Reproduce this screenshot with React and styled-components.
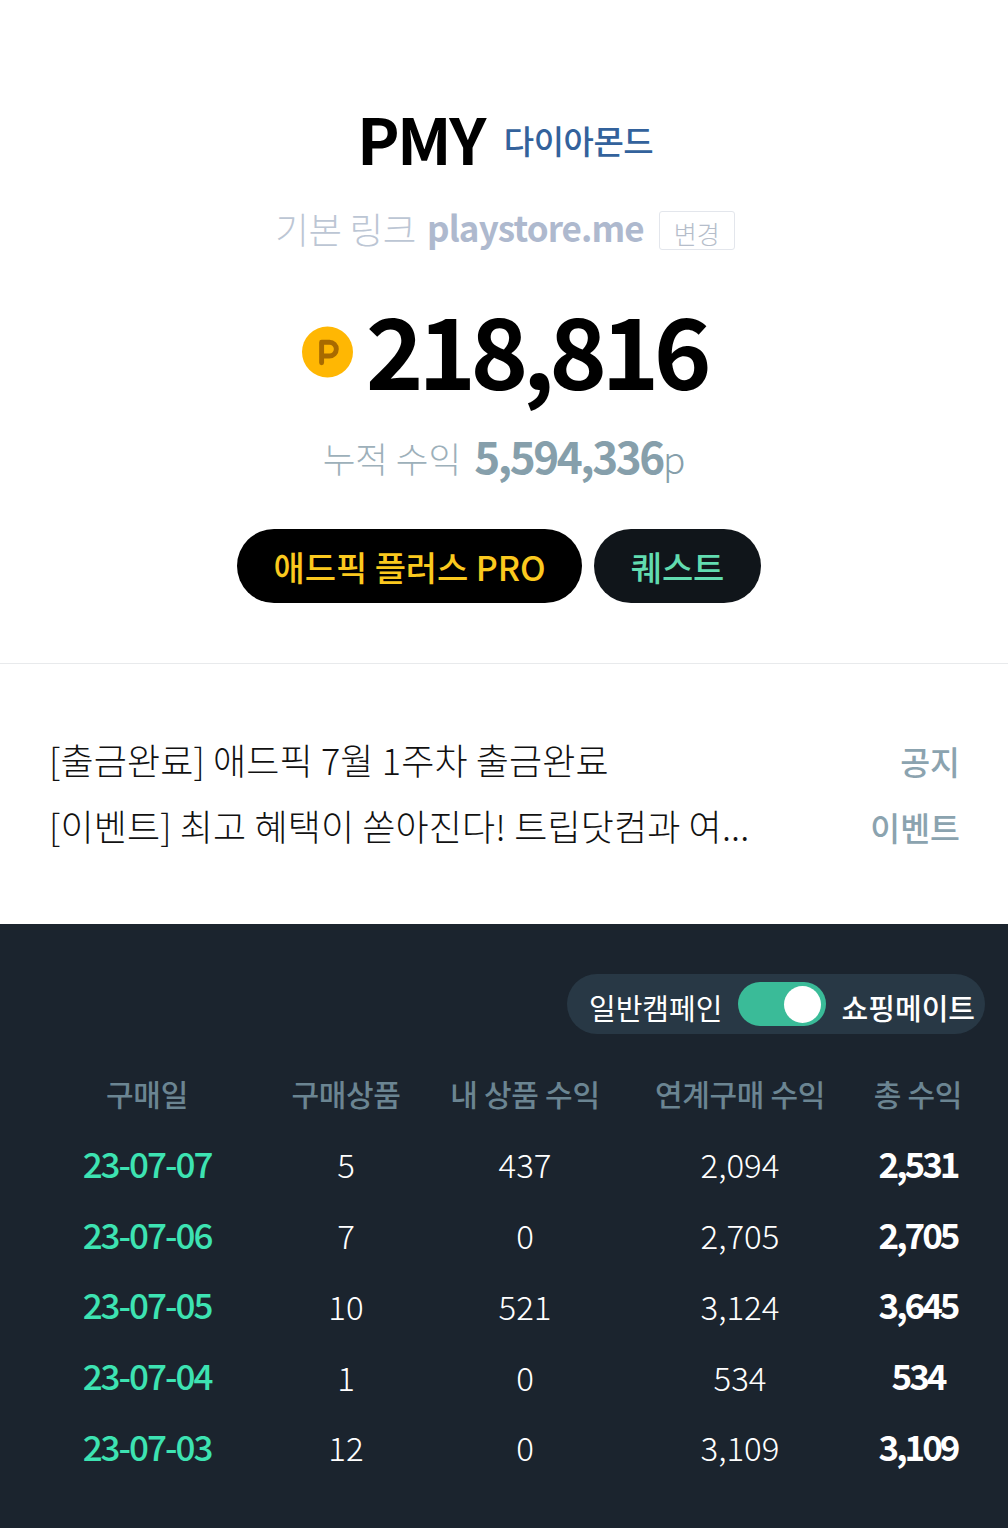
import React from 'react';
import styled, { createGlobalStyle } from 'styled-components';

const GlobalStyle = createGlobalStyle`
  html, body {
    margin: 0;
    padding: 0;
    background: #fff;
    font-family: 'Noto Sans CJK KR', 'Noto Sans', sans-serif;
  }
`;

const Page = styled.div`
  width: 1008px;
  height: 1528px;
  display: flex;
  flex-direction: column;
  overflow: hidden;
`;

const Summary = styled.section`
  height: 664px;
  flex: none;
  box-sizing: border-box;
  padding-top: 102px;
  border-bottom: 1px solid #e8eaec;
  display: flex;
  flex-direction: column;
  align-items: center;
`;

const NameRow = styled.div`
  display: flex;
  align-items: center;
  gap: 20px;
  height: 78px;
  padding-left: 2px;
`;

const Name = styled.span`
  font-size: 64px;
  font-weight: 700;
  letter-spacing: -2.5px;
  color: #000;
  line-height: 78px;
  padding-bottom: 8px;
`;

const Grade = styled.span`
  font-size: 33px;
  font-weight: 500;
  color: #33629c;
  letter-spacing: -0.5px;
  line-height: 78px;
  padding-bottom: 2px;
`;

const LinkRow = styled.div`
  margin-top: 18px;
  height: 60px;
  padding-left: 2px;
  display: flex;
  align-items: center;
  gap: 11px;
`;

const LinkLabel = styled.span`
  font-size: 36.5px;
  font-weight: 300;
  color: #bcc6d4;
  letter-spacing: -0.3px;
`;

const LinkHost = styled.b`
  font-size: 35px;
  font-weight: 700;
  color: #aeb9ce;
  letter-spacing: -0.9px;
  margin-right: 4px;
  padding-bottom: 4px;
`;

const ChangeButton = styled.button`
  width: 76px;
  height: 39px;
  margin-top: 4px;
  box-sizing: border-box;
  padding: 5px 0 0;
  border: 1px solid #e3e6ec;
  border-radius: 3px;
  background: #fff;
  font: 300 25px/30px 'Noto Sans CJK KR', sans-serif;
  color: #b5bdca;
`;

const PointRow = styled.div`
  margin-top: 28px;
  height: 122px;
  display: flex;
  align-items: center;
  gap: 13px;
`;

const Coin = styled.svg`
  width: 51px;
  height: 52px;
  flex: none;
  margin-top: 10px;
`;

const Points = styled.span`
  font-size: 98px;
  font-weight: 700;
  letter-spacing: -5.5px;
  line-height: 122px;
  color: #000;
`;

const TotalRow = styled.div`
  margin-top: 17px;
  height: 60px;
  display: flex;
  align-items: center;
  gap: 13px;
`;

const TotalLabel = styled.span`
  font-size: 35.5px;
  font-weight: 300;
  color: #9db0ba;
  padding-top: 4px;
`;

const TotalValue = styled.span`
  font-size: 44px;
  font-weight: 700;
  color: #869fab;
  letter-spacing: -2.4px;

  small {
    font-size: 37px;
    font-weight: 300;
    letter-spacing: 0;
  }
`;

const Buttons = styled.div`
  margin-top: 44px;
  margin-right: 10px;
  display: flex;
  gap: 12px;
`;

const PillButton = styled.button`
  width: ${(p) => p.$width}px;
  height: 74px;
  padding: 2px 0 0;
  border: 0;
  border-radius: 37px;
  background: ${(p) => p.$bg};
  color: ${(p) => p.$color};
  font: 500 34px/40px 'Noto Sans CJK KR', sans-serif;
  letter-spacing: -0.1px;
`;

const Notices = styled.section`
  height: 260px;
  flex: none;
  box-sizing: border-box;
  padding: 70px 48px 0 49px;
  display: flex;
  flex-direction: column;
  gap: 16px;
`;

const NoticeRow = styled.div`
  height: 50px;
  display: flex;
  align-items: center;
  justify-content: space-between;
`;

const NoticeTitle = styled.span`
  font-size: 36px;
  font-weight: 300;
  color: #111;
  letter-spacing: 0.14px;
`;

const NoticeTag = styled.span`
  font-size: 32.5px;
  font-weight: 500;
  color: #8ba3af;
  padding-top: 2px;
`;

const Earnings = styled.section`
  flex: 1;
  background: #1b242e;
  padding-top: 50px;
`;

const ToggleBar = styled.div`
  display: flex;
  justify-content: flex-end;
  padding-right: 23px;
`;

const TogglePill = styled.div`
  width: 418px;
  height: 60px;
  box-sizing: border-box;
  padding: 0 10px 0 22px;
  border-radius: 30px;
  background: #283845;
  display: flex;
  align-items: center;
  justify-content: space-between;
`;

const ToggleLabel = styled.span`
  font-size: 29px;
  font-weight: ${(p) => (p.$active ? 500 : 400)};
  color: #fff;
  padding-top: 5px;
`;

const ToggleTrack = styled.div`
  width: 88px;
  height: 44px;
  border-radius: 22px;
  background: #3abb98;
  display: flex;
  align-items: center;
  justify-content: flex-end;
  padding-right: 5px;
  box-sizing: border-box;
`;

const ToggleKnob = styled.div`
  width: 37px;
  height: 37px;
  border-radius: 50%;
  background: #fff;
`;

const Table = styled.div`
  margin-top: 24px;
  padding-left: 40px;
`;

const Row = styled.div`
  display: grid;
  grid-template-columns: 214px 184px 174px 256px 100px;
  height: ${(p) => p.$height}px;
  align-items: center;
  justify-items: center;
  white-space: nowrap;
`;

const HeadCell = styled.span`
  font-size: 30px;
  font-weight: 500;
  color: #6b8592;
  letter-spacing: -0.3px;
`;

const DateCell = styled.span`
  font-size: 35px;
  font-weight: 500;
  color: #3de3b2;
  letter-spacing: -2px;
`;

const Cell = styled.span`
  font-size: 33px;
  font-weight: 300;
  color: #fff;
  padding-top: 4px;
`;

const TotalCell = styled.span`
  font-size: 35px;
  font-weight: 700;
  color: #fff;
  letter-spacing: -3px;
`;

const rows = [
  ['23-07-07', '5', '437', '2,094', '2,531'],
  ['23-07-06', '7', '0', '2,705', '2,705'],
  ['23-07-05', '10', '521', '3,124', '3,645'],
  ['23-07-04', '1', '0', '534', '534'],
  ['23-07-03', '12', '0', '3,109', '3,109'],
];

export default function App() {
  return (
    <Page>
      <GlobalStyle />
      <Summary>
        <NameRow>
          <Name>PMY</Name>
          <Grade>다이아몬드</Grade>
        </NameRow>
        <LinkRow>
          <LinkLabel>기본 링크</LinkLabel>
          <LinkHost>playstore.me</LinkHost>
          <ChangeButton>변경</ChangeButton>
        </LinkRow>
        <PointRow>
          <Coin viewBox="0 0 52 52">
            <circle cx="26" cy="26" r="26" fill="#ffb703" />
            <path d="M20 37V16h8a7 7 0 0 1 0 14h-8" fill="none" stroke="#a86a00" strokeWidth="5" strokeLinecap="round" strokeLinejoin="round" />
          </Coin>
          <Points>218,816</Points>
        </PointRow>
        <TotalRow>
          <TotalLabel>누적 수익</TotalLabel>
          <TotalValue>5,594,336<small>p</small></TotalValue>
        </TotalRow>
        <Buttons>
          <PillButton $width={345} $bg="#000" $color="#fbc91e">애드픽 플러스 PRO</PillButton>
          <PillButton $width={167} $bg="#10151a" $color="#62dcb0">퀘스트</PillButton>
        </Buttons>
      </Summary>
      <Notices>
        <NoticeRow>
          <NoticeTitle>[출금완료] 애드픽 7월 1주차 출금완료</NoticeTitle>
          <NoticeTag>공지</NoticeTag>
        </NoticeRow>
        <NoticeRow>
          <NoticeTitle>[이벤트] 최고 혜택이 쏟아진다! 트립닷컴과 여...</NoticeTitle>
          <NoticeTag>이벤트</NoticeTag>
        </NoticeRow>
      </Notices>
      <Earnings>
        <ToggleBar>
          <TogglePill>
            <ToggleLabel>일반캠페인</ToggleLabel>
            <ToggleTrack><ToggleKnob /></ToggleTrack>
            <ToggleLabel $active>쇼핑메이트</ToggleLabel>
          </TogglePill>
        </ToggleBar>
        <Table>
          <Row $height={69}>
            <HeadCell>구매일</HeadCell>
            <HeadCell>구매상품</HeadCell>
            <HeadCell>내 상품 수익</HeadCell>
            <HeadCell>연계구매 수익</HeadCell>
            <HeadCell>총 수익</HeadCell>
          </Row>
          {rows.map((r) => (
            <Row key={r[0]} $height={70.75}>
              <DateCell>{r[0]}</DateCell>
              <Cell>{r[1]}</Cell>
              <Cell>{r[2]}</Cell>
              <Cell>{r[3]}</Cell>
              <TotalCell>{r[4]}</TotalCell>
            </Row>
          ))}
        </Table>
      </Earnings>
    </Page>
  );
}
